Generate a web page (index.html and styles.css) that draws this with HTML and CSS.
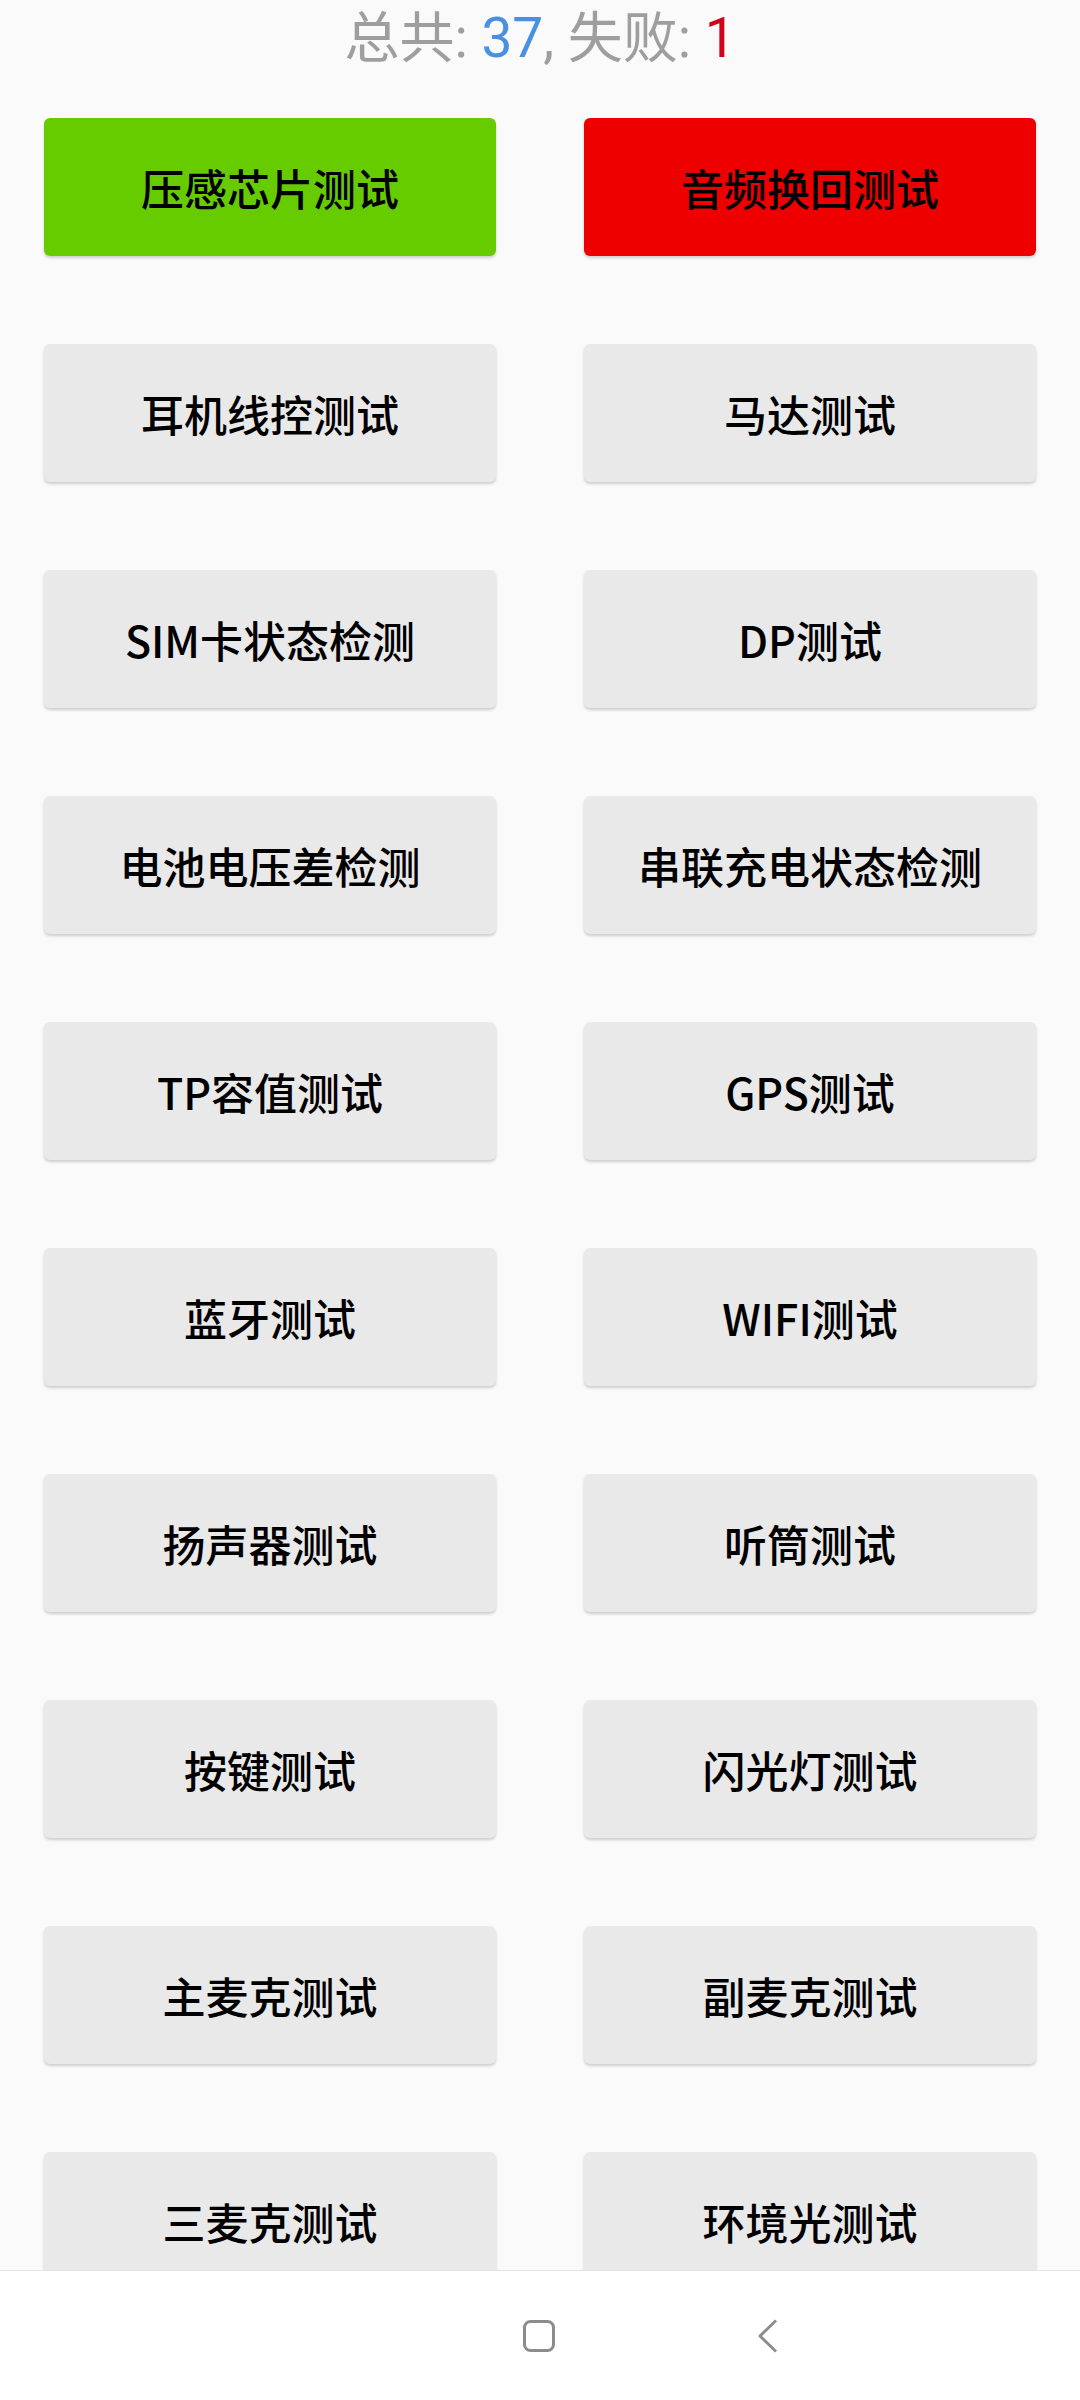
FILE: index.html
```html
<!DOCTYPE html>
<html lang="zh-CN">
<head>
    <meta charset="UTF-8">
    <meta name="viewport" content="width=device-width, initial-scale=1.0">
    <title>测试</title>
    <link rel="stylesheet" href="styles.css">
</head>
<body>

<div class="summary">
    总共: <span class="total">37</span>, 失败: <span class="failed">1</span>
</div>

<div class="test-grid">
    <button class="test-btn pass">压感芯片测试</button>
    <button class="test-btn fail">音频换回测试</button>
    <button class="test-btn">耳机线控测试</button>
    <button class="test-btn">马达测试</button>
    <button class="test-btn">SIM卡状态检测</button>
    <button class="test-btn">DP测试</button>
    <button class="test-btn">电池电压差检测</button>
    <button class="test-btn">串联充电状态检测</button>
    <button class="test-btn">TP容值测试</button>
    <button class="test-btn">GPS测试</button>
    <button class="test-btn">蓝牙测试</button>
    <button class="test-btn">WIFI测试</button>
    <button class="test-btn">扬声器测试</button>
    <button class="test-btn">听筒测试</button>
    <button class="test-btn">按键测试</button>
    <button class="test-btn">闪光灯测试</button>
    <button class="test-btn">主麦克测试</button>
    <button class="test-btn">副麦克测试</button>
    <button class="test-btn">三麦克测试</button>
    <button class="test-btn">环境光测试</button>
</div>

<!-- system navigation bar -->
<div class="nav-bar">
    <svg class="nav-icon" width="34" height="34" viewBox="0 0 34 34">
        <rect x="2.5" y="2.5" width="29" height="29" rx="6" fill="none" stroke="#8c8c8c" stroke-width="3"/>
    </svg>
    <svg class="nav-icon" width="22" height="34" viewBox="0 0 22 34">
        <polyline points="19,1.5 3,17 19,32.5" fill="none" stroke="#8c8c8c" stroke-width="3" stroke-linejoin="round"/>
    </svg>
</div>

</body>
</html>
```
FILE: styles.css
```css
body {
    margin: 0;
    background-color: #fafafa;
    font-family: "Noto Sans CJK SC", "Noto Sans", sans-serif;
}

/* Result line on top */
.summary {
    height: 76px;
    line-height: 76px;
    text-align: center;
    font-size: 55px;
    color: #9e9e9e;
    font-family: Roboto, "Noto Sans CJK SC", sans-serif;
}

.summary .total {
    color: #4a90e2;
}

.summary .failed {
    color: #d0021b;
}

/* Two columns of test buttons */
.test-grid {
    display: grid;
    grid-template-columns: 1fr 1fr;
    gap: 88px;
    padding: 42px 44px 200px 44px;
}

.test-btn {
    height: 138px;
    border: none;
    border-radius: 6px;
    background-color: #e9e9e9;
    box-shadow: 0 2px 3px rgba(0, 0, 0, 0.18);
    font-family: "Noto Sans CJK SC", sans-serif;
    font-size: 43px;
    font-weight: 500;
    color: #000;
    padding: 0;
}

.test-btn.pass {
    background-color: #66cc00;
}

.test-btn.fail {
    background-color: #ee0000;
}

/* Bottom navigation bar */
.nav-bar {
    position: fixed;
    left: 0;
    right: 0;
    bottom: 0;
    height: 129px;
    background-color: #fff;
    border-top: 1px solid #e4e4e4;
    display: flex;
    align-items: center;
    padding-left: 522px;
    gap: 201px;
}

.nav-icon {
    display: block;
}
```
